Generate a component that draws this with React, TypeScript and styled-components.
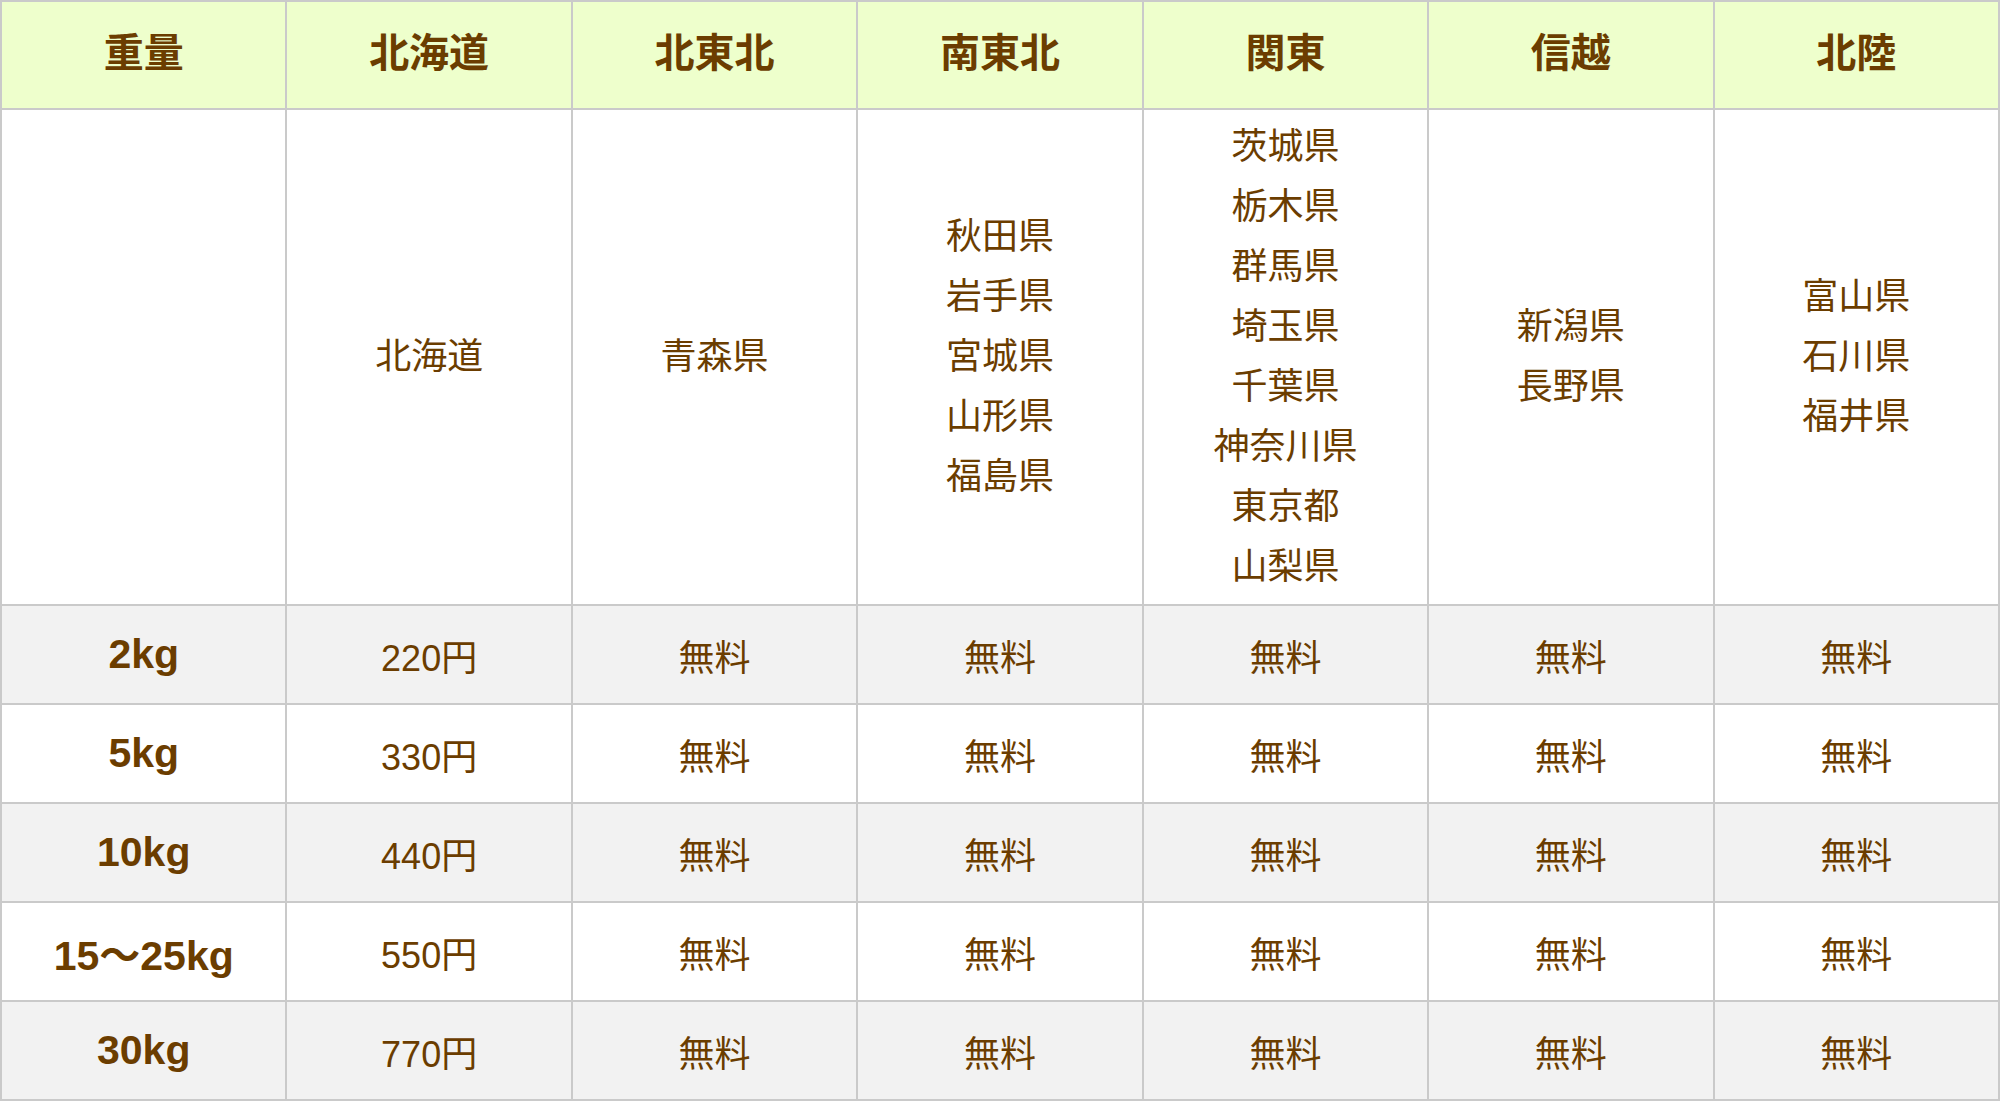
import styled, { createGlobalStyle } from 'styled-components';

const GlobalStyle = createGlobalStyle`
  html, body {
    margin: 0;
    padding: 0;
    background: #fff;
  }
  body {
    font-family: 'Liberation Sans', 'Noto Sans CJK JP', sans-serif;
  }
`;

const TEXT_COLOR = '#6b3d00';
const BORDER = '2px solid #cacaca';

const REGIONS = ['北海道', '北東北', '南東北', '関東', '信越', '北陸'];

const PREFECTURES: string[][] = [
  ['北海道'],
  ['青森県'],
  ['秋田県', '岩手県', '宮城県', '山形県', '福島県'],
  ['茨城県', '栃木県', '群馬県', '埼玉県', '千葉県', '神奈川県', '東京都', '山梨県'],
  ['新潟県', '長野県'],
  ['富山県', '石川県', '福井県'],
];

const RATES = [
  { weight: '2kg', hokkaido: '220円' },
  { weight: '5kg', hokkaido: '330円' },
  { weight: '10kg', hokkaido: '440円' },
  { weight: '15〜25kg', hokkaido: '550円' },
  { weight: '30kg', hokkaido: '770円' },
];

const Table = styled.table`
  width: 2000px;
  border-collapse: collapse;
  table-layout: fixed;
  border: ${BORDER};
  color: ${TEXT_COLOR};
  font-family: 'Liberation Sans', 'Noto Sans CJK JP', sans-serif;
`;

const HeadRow = styled.tr`
  height: 108px;
  background: #eeffcc;
`;

const HeadCell = styled.th`
  border: ${BORDER};
  padding: 0 0 10px;
  font-size: 40px;
  font-weight: 700;
  text-align: center;
  vertical-align: middle;
`;

const AreaRow = styled.tr`
  height: 496px;
  background: #ffffff;
`;

const PriceRow = styled.tr<{ $striped: boolean }>`
  height: 99px;
  background: ${({ $striped }) => ($striped ? '#f2f2f2' : '#ffffff')};
`;

const WeightCell = styled.th`
  border: ${BORDER};
  padding: 0;
  font-size: 41px;
  font-weight: 700;
  text-align: center;
  vertical-align: middle;
`;

const Cell = styled.td`
  border: ${BORDER};
  padding: 0;
  font-size: 36px;
  font-weight: 400;
  text-align: center;
  vertical-align: middle;
`;

const PrefList = styled.div`
  display: flex;
  flex-direction: column;
  align-items: center;
  line-height: 60px;
`;

export default function App() {
  return (
    <>
      <GlobalStyle />
      <Table>
        <thead>
          <HeadRow>
            <HeadCell>重量</HeadCell>
            {REGIONS.map((r) => (
              <HeadCell key={r}>{r}</HeadCell>
            ))}
          </HeadRow>
        </thead>
        <tbody>
          <AreaRow>
            <Cell />
            {PREFECTURES.map((list, i) => (
              <Cell key={i}>
                <PrefList>
                  {list.map((p) => (
                    <span key={p}>{p}</span>
                  ))}
                </PrefList>
              </Cell>
            ))}
          </AreaRow>
          {RATES.map((rate, i) => (
            <PriceRow key={rate.weight} $striped={i % 2 === 0}>
              <WeightCell>{rate.weight}</WeightCell>
              <Cell>{rate.hokkaido}</Cell>
              {REGIONS.slice(1).map((r) => (
                <Cell key={r}>無料</Cell>
              ))}
            </PriceRow>
          ))}
        </tbody>
      </Table>
    </>
  );
}
